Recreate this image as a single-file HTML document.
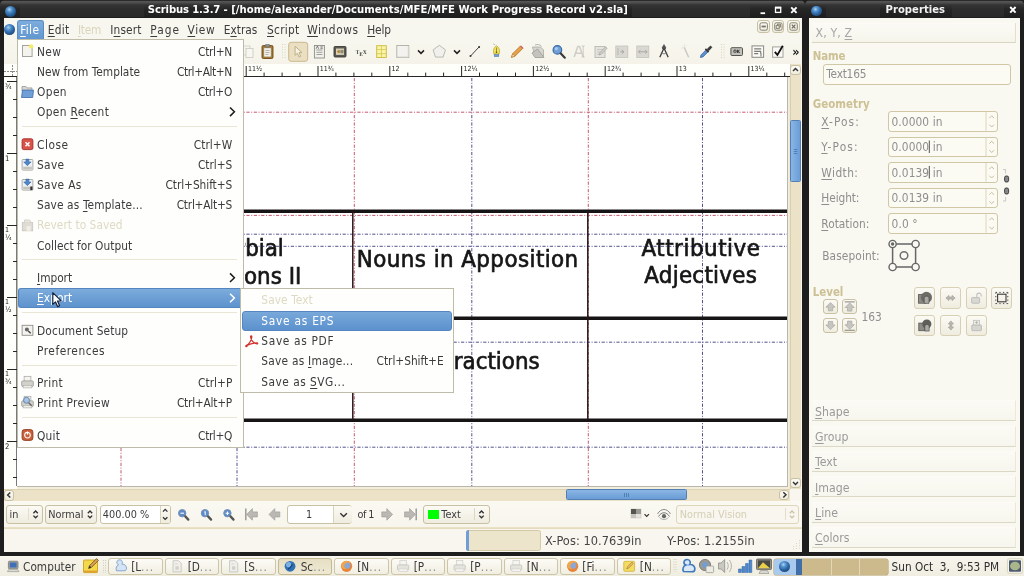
<!DOCTYPE html><html><head><meta charset="utf-8"><title>Scribus 1.3.7</title><style>
html,body{margin:0;padding:0;}
body{width:1024px;height:576px;overflow:hidden;background:#1d1d1d;position:relative;font-family:"DejaVu Sans Condensed","DejaVu Sans","Liberation Sans",sans-serif;font-stretch:condensed;color:#3b3b3b;}
div,svg,span{position:absolute;box-sizing:border-box;}
u{text-decoration:underline;text-underline-offset:1.5px;text-decoration-thickness:1px;}
.btn{border:1px solid #c9c1a4;border-radius:3px;background:linear-gradient(#fbfaf4,#efecdf);}
.fld{border:1px solid #cfc7a6;border-radius:3px;background:#fbfaf3;}

</style></head><body><div id="screen" style="left:0;top:0;width:1024px;height:576px;overflow:hidden;will-change:transform;">
<div style="left:0px;top:0px;width:804.6px;height:556px;background:#1e1e1e;border-radius:5px 5px 0 0;"></div>
<div style="left:802px;top:18px;width:8px;height:538px;background:#1e1e1e;"></div>
<div style="left:0px;top:0px;width:804.6px;height:18.3px;border-radius:5px 5px 0 0;background:linear-gradient(#161616 0px,#585858 1.6px,#4a4a4a 3px,#333 5px,#262626 9px,#1e1e1e 18px);"></div>
<div style="left:20px;top:5px;width:124px;height:12px;background-image:radial-gradient(circle,#363636 0.55px,transparent 0.85px);background-size:2px 2px;"></div>
<div style="left:632px;top:5px;width:118px;height:12px;background-image:radial-gradient(circle,#363636 0.55px,transparent 0.85px);background-size:2px 2px;"></div>
<div style="left:5.4px;top:5.8px;width:11px;height:11px;border-radius:50%;background:radial-gradient(circle at 40% 32%,#a9d3f0 0,#4f8fcb 26%,#2a629f 55%,#12345c 100%);"></div>
<div style="left:147.85px;top:3.41px;font-size:11.2px;line-height:13.04px;color:#ffffff;font-weight:bold;white-space:pre;letter-spacing:-0.137px;">Scribus 1.3.7 -</div>
<div style="left:231.15px;top:3.41px;font-size:11.2px;line-height:13.04px;color:#ffffff;font-weight:bold;white-space:pre;letter-spacing:0.052px;">[/home/alexander/Documents/MFE/MFE Work Progress Record v2.sla]</div>
<svg style="left:755px;top:3px" width="48" height="14" viewBox="0 0 48 14"><g stroke="#fff" fill="none"><path d="M5.5 10.2h4.6" stroke-width="1.8"/><rect x="20.5" y="4.6" width="5.2" height="4.8" stroke-width="1.3"/><path d="M20 4.6h6.200" stroke-width="2"/><path d="M36.200 4.300l5.400 5.600M41.600 4.300l-5.400 5.600" stroke-width="1.9"/></g></svg>
<div style="left:3.5px;top:18px;width:798.3px;height:534.4px;background:#f8f6ee;"></div>
<div style="left:3.5px;top:18px;width:798.3px;height:21.5px;background:#f8f7ef;"></div>
<div style="left:4.2px;top:24px;width:10.6px;height:10.6px;border-radius:50%;background:radial-gradient(circle at 40% 32%,#a9d3f0 0,#4f8fcb 26%,#2a629f 55%,#12345c 100%);"></div>
<div style="left:16.5px;top:20px;width:27.6px;height:19.5px;background:linear-gradient(#7dacdc,#6096d0);border-radius:3px 3px 0 0;border:1px solid #5a8cc4;border-bottom:none;"></div>
<div style="left:20.13px;top:23.65px;font-size:11.8px;line-height:13.74px;color:#fff;font-weight:normal;white-space:pre;letter-spacing:0.364px;"><u>F</u>ile</div>
<div style="left:47.73px;top:23.65px;font-size:11.8px;line-height:13.74px;color:#3b3b3b;font-weight:normal;white-space:pre;letter-spacing:0.334px;"><u>E</u>dit</div>
<div style="left:77.93px;top:23.65px;font-size:11.8px;line-height:13.74px;color:#dad5bc;font-weight:normal;white-space:pre;letter-spacing:-0.264px;"><u>I</u>tem</div>
<div style="left:110.33px;top:23.65px;font-size:11.8px;line-height:13.74px;color:#3b3b3b;font-weight:normal;white-space:pre;letter-spacing:0.102px;">I<u>n</u>sert</div>
<div style="left:150.33px;top:23.65px;font-size:11.8px;line-height:13.74px;color:#3b3b3b;font-weight:normal;white-space:pre;letter-spacing:0.975px;"><u>P</u>age</div>
<div style="left:187.53px;top:23.65px;font-size:11.8px;line-height:13.74px;color:#3b3b3b;font-weight:normal;white-space:pre;letter-spacing:0.636px;"><u>V</u>iew</div>
<div style="left:223.73px;top:23.65px;font-size:11.8px;line-height:13.74px;color:#3b3b3b;font-weight:normal;white-space:pre;letter-spacing:0.003px;">E<u>x</u>tras</div>
<div style="left:267.03px;top:23.65px;font-size:11.8px;line-height:13.74px;color:#3b3b3b;font-weight:normal;white-space:pre;letter-spacing:0.277px;"><u>S</u>cript</div>
<div style="left:307.13px;top:23.65px;font-size:11.8px;line-height:13.74px;color:#3b3b3b;font-weight:normal;white-space:pre;letter-spacing:0.601px;"><u>W</u>indows</div>
<div style="left:367.23px;top:23.65px;font-size:11.8px;line-height:13.74px;color:#3b3b3b;font-weight:normal;white-space:pre;letter-spacing:-0.146px;"><u>H</u>elp</div>
<div class="btn" style="left:757.3px;top:20.2px;width:12.4px;height:12.4px;"></div>
<div class="btn" style="left:772.1px;top:20.2px;width:12.4px;height:12.4px;"></div>
<div class="btn" style="left:787.3px;top:20.2px;width:12.4px;height:12.4px;"></div>
<svg style="left:757px;top:20px" width="44" height="13" viewBox="0 0 44 13"><g stroke="#85826f" stroke-width="1" fill="none"><rect x="3" y="2.800" width="7.400" height="7.400" rx="1.500"/><path d="M4.600 6.500h4.200" stroke-width="1.800" stroke="#77746a"/><rect x="17.700" y="2.800" width="7.400" height="7.400" rx="1.500"/><rect x="20.400" y="4.200" width="3" height="2.800"/><rect x="19.200" y="5.600" width="3" height="2.800" fill="#f3f1e6"/><rect x="32.900" y="2.800" width="7.400" height="7.400" rx="1.500"/><path d="M34.800 4.700l3.600 3.600M38.400 4.700l-3.600 3.600" stroke-width="1.200" stroke="#6d6a5a"/></g></svg>
<div style="left:3.5px;top:39.5px;width:798.3px;height:24.5px;background:linear-gradient(#f8f7ef,#f5f3e9);"></div>
<svg style="left:0;top:0" width="806" height="66" viewBox="0 0 806 66"><g transform="translate(248 51.5)"><rect x="-5" y="-5.5" width="7" height="9" fill="#f4f3ee" stroke="#cfcdc2" stroke-width=".8"/><rect x="-2" y="-3" width="7" height="9" fill="#f8f7f2" stroke="#c9c7bb" stroke-width=".8"/></g><g transform="translate(267.5 51.5)"><rect x="-5.5" y="-6" width="11" height="13" rx="1.3" fill="#a8772a" stroke="#6e4a12" stroke-width=".9"/><rect x="-3.6" y="-3.6" width="7.2" height="9" fill="#f2f0e8" stroke="#8d8a7e" stroke-width=".5"/><rect x="-2.3" y="-7" width="4.6" height="2.6" rx=".8" fill="#8f8f8f" stroke="#555" stroke-width=".5"/><path d="M-2 -1h4M-2 1h4M-2 3h3" stroke="#9a978c" stroke-width=".7"/></g><path d="M282.5 44v15M285 44v15" stroke="#d8d3c0" stroke-width="1" stroke-dasharray="1 1.6"/><path d="M721.5 44v15M724 44v15" stroke="#d8d3c0" stroke-width="1" stroke-dasharray="1 1.6"/><rect x="288.7" y="42.3" width="19" height="19" rx="2.5" fill="#eadfc2" stroke="#c9b88b" stroke-width="1"/><g transform="translate(298.3 51.5)"><path d="M-3.2 -5.2l0 9 2.2-2 1.8 3.8 1.6-.8-1.8-3.6 3-.2z" fill="#f7f3e4" stroke="#b9a97c" stroke-width=".9" stroke-linejoin="round"/></g><g transform="translate(319.4 51.5)"><rect x="-5" y="-6" width="10" height="12.5" fill="#f1f0eb" stroke="#8d8d88" stroke-width=".9"/><path d="M-3 -1.5h6M-3 .8h6M-3 3h6" stroke="#8a8a86" stroke-width=".8"/><path d="M-3.3 -2.7l1.3-2.8 1.3 2.8M1 -4.6h2.4M1 -3.2h2.4" stroke="#555" stroke-width=".7" fill="none"/></g><g transform="translate(340 51.5)"><rect x="-6" y="-5" width="12" height="10.5" rx="1" fill="#5a5852" stroke="#3c3a35" stroke-width=".9"/><rect x="-4" y="-3" width="8" height="6.4" fill="#d9d2b6"/><circle cx="-1.2" cy="0" r="1.6" fill="#b58a3a"/><rect x="0.5" y="-1.6" width="3" height="3.4" fill="#8d8a7a"/></g><text x="361.2" y="54.3" text-anchor="middle" font-size="5.2" font-weight="bold" fill="#4a4a4a" font-family='"DejaVu Serif","Liberation Serif",serif'>T<tspan dy="1.3">E</tspan><tspan dy="-1.3">X</tspan></text><g transform="translate(381.5 51.5)"><rect x="-4.8" y="-5.800" width="9.600" height="11.800" fill="#f9f3a6" stroke="#cbb93a" stroke-width=".9"/><path d="M0 -5.800v11.800M-4.800 -2h9.600M-4.800 2.200h9.600" stroke="#d2c24e" stroke-width=".7"/></g><g transform="translate(402.8 51.5)"><rect x="-6" y="-6" width="12" height="12" fill="#f3f2ee" stroke="#aeada6" stroke-width=".9"/><path d="M-5.5 5.5h11v-11" stroke="#d6d5cf" stroke-width="1" fill="none"/></g><g transform="translate(421 52.0)"><path d="M-3 -1.6l3 3 3-3" stroke="#222" stroke-width="1.5" fill="none"/></g><g transform="translate(439.3 51.5)"><path d="M0 -6.2l6.2 4.6-2.4 7.2h-7.6l-2.4-7.2z" fill="#f1f0ec" stroke="#b4b3ac" stroke-width=".9"/></g><g transform="translate(457 52.0)"><path d="M-3 -1.6l3 3 3-3" stroke="#222" stroke-width="1.5" fill="none"/></g><g transform="translate(474.8 51.5)"><path d="M-4.3 4.6l8.6-9.2" stroke="#444" stroke-width="1"/><circle cx="-4.3" cy="4.6" r="1" fill="#333"/><circle cx="4.3" cy="-4.6" r="1" fill="#333"/></g><g transform="translate(496.5 51.5)"><path d="M0 -5.800c2.800 2 3.800 5 2.400 8.400h-4.800c-1.400-3.400-.4-6.400 2.400-8.400z" fill="#f1e25e" stroke="#b8a228" stroke-width=".8"/><path d="M0 -4v4.400" stroke="#7a6c22" stroke-width=".7"/><circle cx="0" cy=".8" r=".8" fill="#5a4e10"/><rect x="-2.400" y="3" width="4.800" height="2.200" fill="#6f9fd6" stroke="#44709f" stroke-width=".4"/><path d="M-1.200 -6.400l-2.200-1.400" stroke="#aaa" stroke-width=".7"/></g><g transform="translate(517.3 51.5)"><path d="M-5.8 5.8l1.2-3.6 7.8-7.8 2.4 2.4-7.8 7.8z" fill="#e6a04a" stroke="#b0702a" stroke-width=".8"/><path d="M-5.8 5.8l1.2-3.6 2.4 2.4z" fill="#f1d9a8" stroke="#b0702a" stroke-width=".5"/><path d="M3.2 -5.6l2.4 2.4" stroke="#c66" stroke-width="1.4"/></g><g transform="translate(538 51.5)"><path d="M-5.5 -4.5h8l3 3v6.5h-8.5z" fill="#d7d6d1" stroke="#a9a8a2" stroke-width=".8"/><path d="M-6 1.5l5.5-4 6.5 8.5h-9z" fill="#c4c3bd" stroke="#9c9b95" stroke-width=".8"/><path d="M-3 -6.5c2.5-1 5-.4 6.6 1.4" stroke="#aaa" stroke-width=".9" fill="none"/></g><g transform="translate(558.8 51.5)"><circle cx="-1.4" cy="-1.6" r="4.3" fill="#6f9fd6" stroke="#3b6caa" stroke-width="1.2"/><circle cx="-2.4" cy="-2.8" r="1.6" fill="#a9c8ea"/><path d="M1.8 1.8l4.2 4.4" stroke="#3a3a3a" stroke-width="2.2" stroke-linecap="round"/></g><g transform="translate(579 51.5)"><path d="M-4.8 5.5l3.6-10.5h1.8l3.6 10.5M-3.2 1.8h5.6" stroke="#cfcec8" stroke-width="1.6" fill="none"/><path d="M4.2 -5.5v11M2.8 -5.5h2.8M2.8 5.5h2.8" stroke="#c2c1bb" stroke-width=".8"/></g><g transform="translate(600.5 51.5)"><rect x="-5.5" y="-5" width="10" height="11" fill="#e4e3de" stroke="#b9b8b2" stroke-width=".9"/><path d="M-3.5 -2h6M-3.5 .4h5M-3.5 2.8h3.5" stroke="#c2c1bb" stroke-width=".8"/><path d="M-1.5 3.5l1-2.4 5.6-5.8 1.5 1.5-5.6 5.8z" fill="#d1d0ca" stroke="#a3a29c" stroke-width=".7"/></g><g transform="translate(621.8 51.5)"><rect x="-6" y="-5.5" width="12" height="11.5" fill="#d9d8d3" stroke="#c3c2bc" stroke-width=".8"/><path d="M-1.5 .3h3.5M0 -1.6l2.2 1.9-2.2 1.9" stroke="#a9a8a2" stroke-width="1" fill="none"/><path d="M-3.8 -3.5v7" stroke="#b5b4ae" stroke-width=".9"/></g><g transform="translate(642.8 51.5)"><rect x="-6" y="-5.5" width="12" height="11.5" fill="#d9d8d3" stroke="#c3c2bc" stroke-width=".8"/><path d="M-4 .3h8M-2.4 -1.4l-2 1.7 2 1.7M2.4 -1.4l2 1.7-2 1.7" stroke="#a9a8a2" stroke-width="1" fill="none"/></g><g transform="translate(664 51.5)"><path d="M0 -3.4l-4.2 9.2M0 -3.4l4.2 9.2" stroke="#3c3c3c" stroke-width="1.3"/><circle cx="0" cy="-3.8" r="1.7" fill="#555" stroke="#2b2b2b" stroke-width=".6"/><path d="M0 -7v2" stroke="#333" stroke-width="1.2"/><path d="M-3.2 1.4c2 1.2 4.4 1.2 6.4 0" stroke="#666" stroke-width=".8" fill="none"/></g><g transform="translate(686 51.5)"><path d="M-1.8 -4.2l4.4 10" stroke="#c9c8c2" stroke-width="1.5"/><path d="M-3.6 -5.8l1 1M-1.2 -7v1.4M-4.6 -3.4h1.4M.6 -5.8l-.8.8" stroke="#d4d3cd" stroke-width=".7"/></g><g transform="translate(706 51.5)"><path d="M-5.6 6l.6-2.6 5-5 2 2-5 5z" fill="#5b8fd0" stroke="#2e5f9c" stroke-width=".7"/><path d="M-.6 -2.6l3.2 3.2" stroke="#333" stroke-width="1.6"/><path d="M1.2 -2.2l2.6-2.8c1-1 2.6.6 1.6 1.6l-2.8 2.6z" fill="#3a3a3a" stroke="#222" stroke-width=".6"/></g><g transform="translate(736.7 51.5)"><rect x="-5.800" y="-3.800" width="11.600" height="7.800" rx="1" fill="#c2c1bb" stroke="#55544f" stroke-width="1"/></g><text x="736.7" y="53.4" text-anchor="middle" font-size="4.6" font-weight="bold" fill="#1e1e1e" font-family='"DejaVu Sans","Liberation Sans",sans-serif'>OK</text><g transform="translate(757.8 51.5)"><rect x="-5.800" y="-5.600" width="11.600" height="11.400" fill="#fbfaf6" stroke="#8a8983" stroke-width="1"/><path d="M-3.600 -2.600h7M-3.600 -.2h7M-3.600 2.200h4" stroke="#4a4a46" stroke-width=".9"/><path d="M2.2 1.6l1-.6v4" stroke="#333" stroke-width=".7" fill="none"/></g><g transform="translate(778 51.5)"><rect x="-5.400" y="-4.600" width="10.400" height="10.400" fill="#fbfaf6" stroke="#a3a29c" stroke-width="1"/><path d="M-3.200 .4l2.600 3 5.400-9.200" stroke="#111" stroke-width="1.800" fill="none"/></g><text x="795.800" y="56" text-anchor="middle" font-size="12.500" font-weight="bold" fill="#1a1a1a" font-family='"DejaVu Sans","Liberation Sans",sans-serif'>»</text></svg>
<div style="left:3.5px;top:64px;width:786.5px;height:13.2px;background:#fefefb;border-bottom:1px solid #262626;"></div>
<svg style="left:0;top:63px" width="806" height="15" viewBox="0 0 806 15"><path d="M30.8 3V13.700 M48.8 9.600V13.700 M66.7 9.600V13.700 M84.7 9.600V13.700 M102.6 3V13.700 M120.5 9.600V13.700 M138.5 9.600V13.700 M156.4 9.600V13.700 M174.4 3V13.700 M192.3 9.600V13.700 M210.3 9.600V13.700 M228.2 9.600V13.700 M246.2 3V13.700 M264.1 9.600V13.700 M282.1 9.600V13.700 M300.0 9.600V13.700 M318.0 3V13.700 M335.9 9.600V13.700 M353.9 9.600V13.700 M371.8 9.600V13.700 M389.8 3V13.700 M407.8 9.600V13.700 M425.7 9.600V13.700 M443.6 9.600V13.700 M461.6 3V13.700 M479.5 9.600V13.700 M497.5 9.600V13.700 M515.5 9.600V13.700 M533.4 3V13.700 M551.3 9.600V13.700 M569.3 9.600V13.700 M587.2 9.600V13.700 M605.2 3V13.700 M623.1 9.600V13.700 M641.1 9.600V13.700 M659.0 9.600V13.700 M677.0 3V13.700 M695.0 9.600V13.700 M712.9 9.600V13.700 M730.8 9.600V13.700 M748.8 3V13.700 M766.8 9.600V13.700 M784.7 9.600V13.700" stroke="#262626" stroke-width="1" fill="none"/><text x="248.0" y="8.300" font-size="7" fill="#222" font-family='"DejaVu Sans Condensed","DejaVu Sans","Liberation Sans",sans-serif'>11½</text><text x="319.8" y="8.300" font-size="7" fill="#222" font-family='"DejaVu Sans Condensed","DejaVu Sans","Liberation Sans",sans-serif'>11¾</text><text x="391.6" y="8.300" font-size="7" fill="#222" font-family='"DejaVu Sans Condensed","DejaVu Sans","Liberation Sans",sans-serif'>12</text><text x="463.4" y="8.300" font-size="7" fill="#222" font-family='"DejaVu Sans Condensed","DejaVu Sans","Liberation Sans",sans-serif'>12¼</text><text x="535.2" y="8.300" font-size="7" fill="#222" font-family='"DejaVu Sans Condensed","DejaVu Sans","Liberation Sans",sans-serif'>12½</text><text x="607.0" y="8.300" font-size="7" fill="#222" font-family='"DejaVu Sans Condensed","DejaVu Sans","Liberation Sans",sans-serif'>12¾</text><text x="678.8" y="8.300" font-size="7" fill="#222" font-family='"DejaVu Sans Condensed","DejaVu Sans","Liberation Sans",sans-serif'>13</text><text x="750.6" y="8.300" font-size="7" fill="#222" font-family='"DejaVu Sans Condensed","DejaVu Sans","Liberation Sans",sans-serif'>13¼</text></svg>
<div style="left:3.5px;top:64px;width:13.2px;height:13.2px;background:#fefefb;border-bottom:1px solid #262626;"></div>
<svg style="left:4px;top:63px" width="13" height="15"><path d="M0 8.500h13M8.500 2v11" stroke="#8a8a8a" stroke-width="1" fill="none" stroke-dasharray="2 1"/></svg>
<div style="left:3.5px;top:77.2px;width:13.7px;height:411.6px;background:#fefefb;border-right:1px solid #7a7a7a;"></div>
<svg style="left:3.500px;top:77px" width="14" height="412" viewBox="0 0 14 412"><path d="M3 4.5H13.200 M9 22.5H13.200 M9 40.5H13.200 M9 58.5H13.200 M3 76.5H13.200 M9 94.5H13.200 M9 112.5H13.200 M9 130.5H13.200 M3 148.5H13.200 M9 166.5H13.200 M9 184.5H13.200 M9 202.5H13.200 M3 220.5H13.200 M9 238.5H13.200 M9 256.5H13.200 M9 274.5H13.200 M3 292.5H13.200 M9 310.5H13.200 M9 328.5H13.200 M9 346.5H13.200 M3 364.5H13.200 M9 382.5H13.200 M9 400.5H13.200" stroke="#262626" stroke-width="1" fill="none"/><text x="1" y="12.0" font-size="7.500" fill="#222" font-family='"DejaVu Sans Condensed","DejaVu Sans","Liberation Sans",sans-serif'>¾</text><text x="1" y="83.5" font-size="7.600" fill="#222" font-family='"DejaVu Sans Condensed","DejaVu Sans","Liberation Sans",sans-serif'>1</text><text x="1" y="155.0" font-size="7" fill="#222" font-family='"DejaVu Sans Condensed","DejaVu Sans","Liberation Sans",sans-serif'>1</text><text x="1" y="162.5" font-size="7.500" fill="#222" font-family='"DejaVu Sans Condensed","DejaVu Sans","Liberation Sans",sans-serif'>¼</text><text x="1" y="227.0" font-size="7" fill="#222" font-family='"DejaVu Sans Condensed","DejaVu Sans","Liberation Sans",sans-serif'>1</text><text x="1" y="234.5" font-size="7.500" fill="#222" font-family='"DejaVu Sans Condensed","DejaVu Sans","Liberation Sans",sans-serif'>½</text><text x="1" y="299.0" font-size="7" fill="#222" font-family='"DejaVu Sans Condensed","DejaVu Sans","Liberation Sans",sans-serif'>1</text><text x="1" y="306.5" font-size="7.500" fill="#222" font-family='"DejaVu Sans Condensed","DejaVu Sans","Liberation Sans",sans-serif'>¾</text><text x="1" y="371.5" font-size="7.600" fill="#222" font-family='"DejaVu Sans Condensed","DejaVu Sans","Liberation Sans",sans-serif'>2</text></svg>
<div style="left:17.2px;top:77.2px;width:772.8px;height:412px;background:#f3eedc;border-right:1px solid #efe9d4;"></div>
<div style="left:17.2px;top:77.2px;width:770.6px;height:409.6px;background:#b9b7ad;"></div>
<div style="left:17.2px;top:77.2px;width:770.2px;height:409px;background:#ffffff;overflow:hidden;"><svg style="left:-17.2px;top:-77.2px" width="806" height="576" viewBox="0 0 806 576"><path d="M121 78V490" stroke="#b92f4a" stroke-width="0.8" stroke-dasharray="3.2 1.6 1 1.6" fill="none"/><path d="M354.3 78V490" stroke="#b92f4a" stroke-width="0.8" stroke-dasharray="3.2 1.6 1 1.6" fill="none"/><path d="M588.3 78V490" stroke="#b92f4a" stroke-width="0.8" stroke-dasharray="3.2 1.6 1 1.6" fill="none"/><path d="M237 78V490" stroke="#24246e" stroke-width="0.8" stroke-dasharray="3.2 1.6 1 1.6" fill="none"/><path d="M471.8 78V490" stroke="#24246e" stroke-width="0.8" stroke-dasharray="3.2 1.6 1 1.6" fill="none"/><path d="M702.5 78V490" stroke="#24246e" stroke-width="0.8" stroke-dasharray="3.2 1.6 1 1.6" fill="none"/><path d="M17 112.2H788" stroke="#b92f4a" stroke-width="0.8" stroke-dasharray="3.2 1.6 1 1.6" fill="none"/><path d="M17 215.4H788" stroke="#b92f4a" stroke-width="0.8" stroke-dasharray="3.2 1.6 1 1.6" fill="none"/><path d="M17 234.2H788" stroke="#24246e" stroke-width="0.8" stroke-dasharray="3.2 1.6 1 1.6" fill="none"/><path d="M17 246.3H788" stroke="#24246e" stroke-width="0.8" stroke-dasharray="3.2 1.6 1 1.6" fill="none"/><path d="M17 342.2H788" stroke="#24246e" stroke-width="0.8" stroke-dasharray="3.2 1.6 1 1.6" fill="none"/><path d="M17 447.2H788" stroke="#24246e" stroke-width="0.8" stroke-dasharray="3.2 1.6 1 1.6" fill="none"/><path d="M17 211.3H787.5" stroke="#161414" stroke-width="3.6" fill="none"/><path d="M17 318.2H787.5" stroke="#161414" stroke-width="3.6" fill="none"/><path d="M17 420.2H787.5" stroke="#161414" stroke-width="3.6" fill="none"/><path d="M352.8 211V420" stroke="#2a1516" stroke-width="1.5" fill="none"/><path d="M587.8 211V420" stroke="#2a1516" stroke-width="1.5" fill="none"/></svg><div style="left:227.5px;top:0px;width:100px;height:409px;overflow:hidden;"><div style="right:60.95px;top:157.41px;font-size:23.8px;line-height:27.70px;color:#161616;font-weight:normal;white-space:pre;-webkit-text-stroke:0.65px #161616;">Adverbial</div><div style="right:43.45px;top:185.91px;font-size:23.8px;line-height:27.70px;color:#161616;font-weight:normal;white-space:pre;-webkit-text-stroke:0.65px #161616;">Expressions II</div></div><div style="left:339.65px;top:168.81px;font-size:23.8px;line-height:27.70px;color:#161616;font-weight:normal;white-space:pre;letter-spacing:0.434px;-webkit-text-stroke:0.65px #161616;">Nouns in Apposition</div><div style="left:624.35px;top:157.61px;font-size:23.8px;line-height:27.70px;color:#161616;font-weight:normal;white-space:pre;letter-spacing:0.529px;-webkit-text-stroke:0.65px #161616;">Attributive</div><div style="left:627.15px;top:185.21px;font-size:23.8px;line-height:27.70px;color:#161616;font-weight:normal;white-space:pre;letter-spacing:0.269px;-webkit-text-stroke:0.65px #161616;">Adjectives</div><div style="right:247.75px;top:271.31px;font-size:23.8px;line-height:27.70px;color:#161616;font-weight:normal;white-space:pre;-webkit-text-stroke:0.65px #161616;">Contractions</div></div>
<div style="left:790px;top:64px;width:11px;height:424.5px;background:#ebe2c7;border-left:1px solid #d8cfb0;"></div>
<div class="btn" style="left:790.2px;top:64.5px;width:10.5px;height:10px;"></div>
<div class="btn" style="left:790.2px;top:478px;width:10.6px;height:10.4px;"></div>
<div style="left:790.4px;top:120.4px;width:10.2px;height:61.8px;background:linear-gradient(90deg,#8ab6e4,#6a9dd6);border:1px solid #547fb4;border-radius:1.5px;"></div>
<svg style="left:789px;top:63px" width="13" height="427"><g stroke="#333" stroke-width="1.400" fill="none"><path d="M4 8l2.500-2.600 2.500 2.600"/><path d="M4 419l2.500 2.600 2.500-2.600"/></g><path d="M4.800 86.500h3.600M4.800 88.500h3.600M4.800 90.500h3.600" stroke="#4676b0" stroke-width="0.800"/></svg>
<div style="left:3.5px;top:489.2px;width:786.5px;height:11.5px;background:#ebe2c7;border-top:1px solid #ddd3b2;"></div>
<div style="left:3.5px;top:486.4px;width:13.7px;height:3px;background:#fefefb;"></div>
<div class="btn" style="left:4px;top:489.6px;width:10.2px;height:11px;"></div>
<div class="btn" style="left:779.2px;top:489.5px;width:10.3px;height:10.8px;"></div>
<div style="left:566px;top:489.3px;width:121.3px;height:11px;background:linear-gradient(#8ab6e4,#6a9dd6);border:1px solid #547fb4;border-radius:1.5px;"></div>
<svg style="left:4px;top:489px" width="786" height="12"><g stroke="#333" stroke-width="1.400" fill="none"><path d="M6.300 3.400l-2.700 2.600 2.700 2.600"/><path d="M779.300 3.200l2.700 2.600-2.700 2.600"/></g><path d="M620.500 4v4M622.500 4v4M624.500 4v4" stroke="#4676b0" stroke-width="0.800"/></svg>
<div style="left:3.5px;top:500.7px;width:798.3px;height:26.5px;background:linear-gradient(#faf9f2,#f7f5ec);"></div>
<div style="left:3.5px;top:527px;width:798.3px;height:1.8px;background:linear-gradient(#ece4c9,#e2d8b8);"></div>
<div class="btn" style="left:6.2px;top:505.3px;width:36.5px;height:18.3px;"></div>
<div style="left:9.57px;top:509.18px;font-size:10.8px;line-height:12.57px;color:#3b3b3b;font-weight:normal;white-space:pre;">in</div>
<div class="btn" style="left:45.2px;top:505.3px;width:52px;height:18.3px;"></div>
<div style="left:48.37px;top:509.18px;font-size:10.8px;line-height:12.57px;color:#3b3b3b;font-weight:normal;white-space:pre;">Normal</div>
<div style="left:100.2px;top:505.3px;width:71.2px;height:18.3px;background:#fff;border:1px solid #c9c1a4;border-radius:3px;"></div>
<div style="left:159.6px;top:506.3px;width:10.8px;height:16.3px;background:linear-gradient(#fbfaf4,#efecdf);border-left:1px solid #d9d3bb;border-radius:0 2px 2px 0;"></div>
<div style="left:102.87px;top:509.18px;font-size:10.8px;line-height:12.57px;color:#3b3b3b;font-weight:normal;white-space:pre;">400.00 %</div>
<div style="left:287.3px;top:505px;width:65.2px;height:18.8px;background:#fff;border:1px solid #c9c1a4;border-radius:3px;"></div>
<div style="left:333.4px;top:506.3px;width:18.3px;height:16.5px;background:linear-gradient(#fbfaf4,#efecdf);border-left:1px solid #d9d3bb;border-radius:0 2px 2px 0;"></div>
<div style="left:305.97px;top:509.18px;font-size:10.8px;line-height:12.57px;color:#3b3b3b;font-weight:normal;white-space:pre;">1</div>
<div style="left:357.57px;top:509.18px;font-size:10.8px;line-height:12.57px;color:#3b3b3b;font-weight:normal;white-space:pre;letter-spacing:-0.582px;">of 1</div>
<div class="btn" style="left:422.8px;top:505.3px;width:67px;height:18.5px;"></div>
<div style="left:427.8px;top:509.7px;width:11.2px;height:9.2px;background:#00ff00;"></div>
<div style="left:441.37px;top:509.18px;font-size:10.8px;line-height:12.57px;color:#3b3b3b;font-weight:normal;white-space:pre;">Text</div>
<div style="left:676.2px;top:505.3px;width:123px;height:18.5px;border:1px solid #ddd6bb;border-radius:3px;background:#f8f6ee;"></div>
<div style="left:679.87px;top:509.18px;font-size:10.8px;line-height:12.57px;color:#d5cfb5;font-weight:normal;white-space:pre;">Normal Vision</div>
<svg style="left:0;top:500px" width="806" height="30" viewBox="0 0 806 30"><path d="M28.500 8v12" stroke="#e4dfcb" stroke-width="1"/><path d="M33.4 13.200000000000001l2.2-2.2 2.2 2.2M33.4 15.6l2.2 2.2 2.2-2.2" stroke="#2e2e2e" stroke-width="1.300" fill="none"/><path d="M87.8 13.200000000000001l2.2-2.2 2.2 2.2M87.8 15.6l2.2 2.2 2.2-2.2" stroke="#2e2e2e" stroke-width="1.300" fill="none"/><path d="M163.0 11.6l2.2-2.2 2.2 2.2M163.0 17.200000000000003l2.2 2.2 2.2-2.2" stroke="#2e2e2e" stroke-width="1.300" fill="none"/><circle cx="182.2" cy="13.2" r="3.7" fill="#5b8bc9" stroke="#7d93b4" stroke-width="1"/><path d="M185.3 16.4l3 3.200" stroke="#555" stroke-width="2.300" stroke-linecap="round"/><path d="M180.4 13.2h3.6" stroke="#fff" stroke-width="1.1"/><circle cx="205.0" cy="13.2" r="3.7" fill="#5b8bc9" stroke="#7d93b4" stroke-width="1"/><path d="M208.10000000000002 16.4l3 3.200" stroke="#555" stroke-width="2.300" stroke-linecap="round"/><path d="M204.3 12.2l.9-.8v3.8" stroke="#fff" stroke-width="1" fill="none"/><circle cx="227.39999999999998" cy="13.2" r="3.7" fill="#5b8bc9" stroke="#7d93b4" stroke-width="1"/><path d="M230.5 16.4l3 3.200" stroke="#555" stroke-width="2.300" stroke-linecap="round"/><path d="M225.6 13.2h3.6M227.39999999999998 11.399999999999999v3.6" stroke="#fff" stroke-width="1.1"/><path d="M246.6 14.4l5.8 -5.800v3.300h5v5h-5v3.300z" fill="#b9b8b2" stroke="#a09f99" stroke-width=".7"/><path d="M245.79999999999998 8.600000000000001v11.600" stroke="#9c9b95" stroke-width="1.500"/><path d="M269.0 14.4l5.8 -5.800v3.300h5v5h-5v3.300z" fill="#b9b8b2" stroke="#a09f99" stroke-width=".7"/><path d="M392.6 14.4l-5.8 -5.800v3.300h-5v5h5v3.300z" fill="#b9b8b2" stroke="#a09f99" stroke-width=".7"/><path d="M415.40000000000003 14.4l-5.8 -5.800v3.300h-5v5h5v3.300z" fill="#b9b8b2" stroke="#a09f99" stroke-width=".7"/><path d="M416.2 8.600000000000001v11.600" stroke="#9c9b95" stroke-width="1.500"/><path d="M340.3 13.2l3.3 3.2 3.3-3.2" stroke="#333" stroke-width="1.4" fill="none"/><path d="M479.3 13.200000000000001l2.2-2.2 2.2 2.2M479.3 15.6l2.2 2.2 2.2-2.2" stroke="#2e2e2e" stroke-width="1.300" fill="none"/><path d="M474.5 8v12" stroke="#ddd7c0" stroke-width="1"/><rect x="631" y="9" width="10" height="9" fill="#e3e2dd" stroke="#c8c7c1" stroke-width=".6"/><rect x="631" y="9" width="5" height="5" fill="#55544f"/><rect x="636" y="9" width="5" height="5" fill="#9a9993"/><rect x="631" y="14" width="5" height="4" fill="#c4c3bd"/><path d="M644.5 14.2l2.2 2.2 2.2-2.2" stroke="#333" stroke-width="1.2" fill="none"/><path d="M658.5 16.5c3-5 8-5 11 0" stroke="#777" stroke-width="1" fill="none"/><path d="M657.5 14c3.5-6 9.5-6 13 0" stroke="#8a8a8a" stroke-width="1" fill="none"/><circle cx="664" cy="16.2" r="2.1" fill="#666"/><path d="M659.5 17.5c2.6 2.6 6.4 2.6 9 0" stroke="#999" stroke-width=".8" fill="none"/><path d="M789.8 13.200000000000001l2.2-2.2 2.2 2.2M789.8 15.6l2.2 2.2 2.2-2.2" stroke="#c9c3aa" stroke-width="1.300" fill="none"/><path d="M785.5 8v12" stroke="#e3decb" stroke-width="1"/></svg>
<div style="left:465.6px;top:530.2px;width:75px;height:20.6px;background:#ece5cc;border:1px solid #d3c9a6;border-radius:2.5px;"></div>
<div style="left:465.6px;top:530.2px;width:3.2px;height:20.6px;background:#6f9fd6;border-radius:2.5px 0 0 2.5px;"></div>
<div style="left:544.99px;top:534.01px;font-size:12.7px;line-height:14.78px;color:#454545;font-weight:normal;white-space:pre;letter-spacing:0.049px;">X-Pos: 10.7639in</div>
<div style="left:667.09px;top:534.01px;font-size:12.7px;line-height:14.78px;color:#454545;font-weight:normal;white-space:pre;letter-spacing:0.066px;">Y-Pos: 1.2155in</div>
<svg style="left:788px;top:538px" width="13" height="13"><path d="M11.5 2v10M8.5 5v7M5.5 8v4" stroke="#d9d4c0" stroke-width="1" stroke-dasharray="1 1.5"/></svg>
<div style="left:16.8px;top:39px;width:227px;height:408.8px;background:#fefefd;border:1px solid #bfbba9;"></div>
<div style="left:18.2px;top:288.3px;width:222.3px;height:19.3px;background:linear-gradient(#7dacdc,#5d92ce);border-radius:3px 0 0 3px;border:1px solid #5686c2;border-right:none;"></div>
<div style="left:37.03px;top:45.65px;font-size:11.8px;line-height:13.74px;color:#3b3b3b;font-weight:normal;white-space:pre;letter-spacing:0.362px;">New</div>
<div style="right:calc(791.73px - -0.308px);top:45.65px;font-size:11.8px;line-height:13.74px;color:#3b3b3b;font-weight:normal;white-space:pre;letter-spacing:-0.308px;">Ctrl+N</div>
<div style="left:37.03px;top:65.65px;font-size:11.8px;line-height:13.74px;color:#3b3b3b;font-weight:normal;white-space:pre;letter-spacing:0.018px;">New from Template</div>
<div style="right:calc(791.73px - -0.400px);top:65.65px;font-size:11.8px;line-height:13.74px;color:#3b3b3b;font-weight:normal;white-space:pre;letter-spacing:-0.400px;">Ctrl+Alt+N</div>
<div style="left:37.03px;top:86.05px;font-size:11.8px;line-height:13.74px;color:#3b3b3b;font-weight:normal;white-space:pre;letter-spacing:0.407px;">Open</div>
<div style="right:calc(791.73px - -0.352px);top:86.05px;font-size:11.8px;line-height:13.74px;color:#3b3b3b;font-weight:normal;white-space:pre;letter-spacing:-0.352px;">Ctrl+O</div>
<div style="left:37.03px;top:106.25px;font-size:11.8px;line-height:13.74px;color:#3b3b3b;font-weight:normal;white-space:pre;letter-spacing:0.341px;">Open <u>R</u>ecent</div>
<div style="left:22px;top:125.9px;width:215px;height:1px;background:#e9e6d6;"></div>
<div style="left:37.03px;top:138.65px;font-size:11.8px;line-height:13.74px;color:#3b3b3b;font-weight:normal;white-space:pre;letter-spacing:0.540px;">Close</div>
<div style="right:calc(791.73px - 0.060px);top:138.65px;font-size:11.8px;line-height:13.74px;color:#3b3b3b;font-weight:normal;white-space:pre;letter-spacing:0.060px;">Ctrl+W</div>
<div style="left:37.03px;top:158.95px;font-size:11.8px;line-height:13.74px;color:#3b3b3b;font-weight:normal;white-space:pre;letter-spacing:0.339px;">Save</div>
<div style="right:calc(791.73px - -0.027px);top:158.95px;font-size:11.8px;line-height:13.74px;color:#3b3b3b;font-weight:normal;white-space:pre;letter-spacing:-0.027px;">Ctrl+S</div>
<div style="left:37.03px;top:178.95px;font-size:11.8px;line-height:13.74px;color:#3b3b3b;font-weight:normal;white-space:pre;letter-spacing:0.344px;">Save As</div>
<div style="right:calc(791.73px - -0.067px);top:178.95px;font-size:11.8px;line-height:13.74px;color:#3b3b3b;font-weight:normal;white-space:pre;letter-spacing:-0.067px;">Ctrl+Shift+S</div>
<div style="left:37.03px;top:199.45px;font-size:11.8px;line-height:13.74px;color:#3b3b3b;font-weight:normal;white-space:pre;letter-spacing:0.133px;">Save as <u>T</u>emplate...</div>
<div style="right:calc(791.73px - -0.245px);top:199.45px;font-size:11.8px;line-height:13.74px;color:#3b3b3b;font-weight:normal;white-space:pre;letter-spacing:-0.245px;">Ctrl+Alt+S</div>
<div style="left:37.03px;top:219.45px;font-size:11.8px;line-height:13.74px;color:#dedac3;font-weight:normal;white-space:pre;letter-spacing:0.049px;">Revert to Saved</div>
<div style="left:37.03px;top:239.65px;font-size:11.8px;line-height:13.74px;color:#3b3b3b;font-weight:normal;white-space:pre;letter-spacing:0.032px;">Collect for Output</div>
<div style="left:22px;top:259.3px;width:215px;height:1px;background:#e9e6d6;"></div>
<div style="left:37.03px;top:272.15px;font-size:11.8px;line-height:13.74px;color:#3b3b3b;font-weight:normal;white-space:pre;letter-spacing:-0.031px;"><u>I</u>mport</div>
<div style="left:37.03px;top:292.45px;font-size:11.8px;line-height:13.74px;color:#ffffff;font-weight:normal;white-space:pre;letter-spacing:0.066px;"><u>E</u>xport</div>
<div style="left:22px;top:312.3px;width:215px;height:1px;background:#e9e6d6;"></div>
<div style="left:37.03px;top:324.75px;font-size:11.8px;line-height:13.74px;color:#3b3b3b;font-weight:normal;white-space:pre;letter-spacing:0.140px;">Document Setup</div>
<div style="left:37.03px;top:344.75px;font-size:11.8px;line-height:13.74px;color:#3b3b3b;font-weight:normal;white-space:pre;letter-spacing:0.522px;">Preferences</div>
<div style="left:22px;top:364.5px;width:215px;height:1px;background:#e9e6d6;"></div>
<div style="left:37.03px;top:376.75px;font-size:11.8px;line-height:13.74px;color:#3b3b3b;font-weight:normal;white-space:pre;letter-spacing:0.297px;">Print</div>
<div style="right:calc(791.73px - -0.002px);top:376.75px;font-size:11.8px;line-height:13.74px;color:#3b3b3b;font-weight:normal;white-space:pre;letter-spacing:-0.002px;">Ctrl+P</div>
<div style="left:37.03px;top:396.75px;font-size:11.8px;line-height:13.74px;color:#3b3b3b;font-weight:normal;white-space:pre;letter-spacing:0.296px;">Print Preview</div>
<div style="right:calc(791.73px - -0.229px);top:396.75px;font-size:11.8px;line-height:13.74px;color:#3b3b3b;font-weight:normal;white-space:pre;letter-spacing:-0.229px;">Ctrl+Alt+P</div>
<div style="left:22px;top:417.3px;width:215px;height:1px;background:#e9e6d6;"></div>
<div style="left:37.03px;top:429.55px;font-size:11.8px;line-height:13.74px;color:#3b3b3b;font-weight:normal;white-space:pre;letter-spacing:0.226px;">Quit</div>
<div style="right:calc(791.73px - -0.392px);top:429.55px;font-size:11.8px;line-height:13.74px;color:#3b3b3b;font-weight:normal;white-space:pre;letter-spacing:-0.392px;">Ctrl+Q</div>
<div style="left:240px;top:288.3px;width:214.3px;height:105px;background:#fefefd;border:1px solid #bfbba9;"></div>
<div style="left:242px;top:310.7px;width:210.3px;height:20px;background:linear-gradient(#79a9da,#5c91cd);border-radius:3px;border:1px solid #5686c2;"></div>
<div style="left:261.33px;top:294.45px;font-size:11.8px;line-height:13.74px;color:#dedac3;font-weight:normal;white-space:pre;letter-spacing:0.089px;">Save Text</div>
<div style="left:261.33px;top:315.05px;font-size:11.8px;line-height:13.74px;color:#ffffff;font-weight:normal;white-space:pre;letter-spacing:0.751px;">Save as EPS</div>
<div style="left:261.33px;top:335.45px;font-size:11.8px;line-height:13.74px;color:#3b3b3b;font-weight:normal;white-space:pre;letter-spacing:0.666px;">Save as PDF</div>
<div style="left:261.33px;top:355.45px;font-size:11.8px;line-height:13.74px;color:#3b3b3b;font-weight:normal;white-space:pre;letter-spacing:0.232px;">Save as <u>I</u>mage...</div>
<div style="right:calc(580.33px - -0.037px);top:355.45px;font-size:11.8px;line-height:13.74px;color:#3b3b3b;font-weight:normal;white-space:pre;letter-spacing:-0.037px;">Ctrl+Shift+E</div>
<div style="left:261.33px;top:375.65px;font-size:11.8px;line-height:13.74px;color:#3b3b3b;font-weight:normal;white-space:pre;letter-spacing:0.485px;">Save as <u>S</u>VG...</div>
<svg style="left:0;top:0" width="460" height="450" viewBox="0 0 460 450"><path d="M230 107.5l4.4 4.3-4.4 4.3" stroke="#1a1a1a" stroke-width="1.5" fill="none"/><path d="M230 273.4l4.4 4.3-4.4 4.3" stroke="#1a1a1a" stroke-width="1.5" fill="none"/><path d="M230 293.7l4.4 4.3-4.4 4.3" stroke="#ffffff" stroke-width="1.5" fill="none"/><g transform="translate(27.5 51)"><rect x="-5" y="-5.5" width="9.6" height="11" fill="#f4f3ee" stroke="#9b9a94" stroke-width=".9"/><circle cx="3.6" cy="-4.6" r="2.2" fill="#f4ec6a"/></g><g transform="translate(27.5 91.5)"><path d="M-5.5 -5h4l1 1.4h5v3h-10z" fill="#d8d7d2" stroke="#8d8c86" stroke-width=".7"/><path d="M-6 6l1-7.4h11l-.8 7.4z" fill="#6f9fd6" stroke="#3b6caa" stroke-width=".8"/></g><g transform="translate(27.5 144.2)"><rect x="-5.4" y="-5.4" width="10.8" height="10.8" rx="1.6" fill="#d9534b" stroke="#a32c26" stroke-width=".9"/><path d="M-2 -2l4 4M2 -2l-4 4" stroke="#fff" stroke-width="1.5"/></g><g transform="translate(27.5 164.5)"><rect x="-5.400" y="-5" width="10.800" height="10.600" rx=".8" fill="#eef2f7" stroke="#a3a29c" stroke-width=".9"/><rect x="-4.900" y="2" width="9.800" height="3.100" fill="#d4d3cd"/><path d="M-4 3.500h8" stroke="#a9a8a2" stroke-width=".7"/><path d="M-1.600 -5.400h3v2.800h2.200l-3.700 3.800-3.700-3.800h2.200z" fill="#4f86c9" stroke="#2e5f9c" stroke-width=".5"/></g><g transform="translate(27.5 184.5)"><rect x="-5.400" y="-5" width="10.800" height="10.600" rx=".8" fill="#eef2f7" stroke="#a3a29c" stroke-width=".9"/><rect x="-4.900" y="2" width="9.800" height="3.100" fill="#d4d3cd"/><path d="M-4 3.500h8" stroke="#a9a8a2" stroke-width=".7"/><path d="M-1.600 -5.400h3v2.800h2.200l-3.700 3.800-3.700-3.800h2.200z" fill="#4f86c9" stroke="#2e5f9c" stroke-width=".5"/><rect x="2.800" y="2" width="2.200" height="3.600" fill="#333"/></g><g transform="translate(27.5 225)"><rect x="-5.2" y="-2.4" width="10.4" height="8.2" fill="#dedcd4" stroke="#c6c4ba" stroke-width=".8"/><path d="M-3 -2.4v-2.6h5l1 1v1.6" fill="#e9e7df" stroke="#cfcdc3" stroke-width=".8"/><rect x="-1" y="1" width="4" height="4.8" fill="#f0eee6"/></g><g transform="translate(27.5 330.3)"><rect x="-5.4" y="-5" width="10.8" height="10" fill="#f3f2ee" stroke="#8f8e88" stroke-width=".9"/><circle cx="-.6" cy="-.8" r="2" fill="#666"/><path d="M.8 .6l2.4 2.4" stroke="#444" stroke-width="1.4"/></g><g transform="translate(27.5 382.3)"><rect x="-3.4" y="-6" width="6.8" height="5" fill="#f6f5f1" stroke="#a3a29c" stroke-width=".7"/><rect x="-5.8" y="-1.4" width="11.6" height="5.6" rx="1" fill="#d2d1cb" stroke="#9b9a94" stroke-width=".8"/><rect x="-4.4" y="3" width="8.8" height="2.6" fill="#efeee9" stroke="#a9a8a2" stroke-width=".6"/></g><g transform="translate(27.5 402.3)"><rect x="-3.4" y="-6" width="6.8" height="5" fill="#f6f5f1" stroke="#a3a29c" stroke-width=".7"/><rect x="-5.8" y="-1.4" width="11.6" height="5.6" rx="1" fill="#d2d1cb" stroke="#9b9a94" stroke-width=".8"/><rect x="-4.4" y="3" width="8.8" height="2.6" fill="#efeee9" stroke="#a9a8a2" stroke-width=".6"/><circle cx="-1" cy="-2" r="3" fill="#9fbfe4" fill-opacity=".85" stroke="#5a7fae" stroke-width=".9"/><path d="M1.2 .4l3 3" stroke="#666" stroke-width="1.4"/></g><g transform="translate(27.5 435)"><rect x="-5.4" y="-5.4" width="10.8" height="10.8" rx="2.4" fill="#c8603c" stroke="#8e3a1e" stroke-width=".9"/><circle cx="0" cy=".2" r="2.8" fill="none" stroke="#fff" stroke-width="1.1"/><path d="M0 -3.4v3" stroke="#fff" stroke-width="1.2"/></g><path d="M52.800 292.600v11.800l2.700-2.500 2.100 4.700 2-.9-2.100-4.600 3.700-.2z" fill="#fff" stroke="#14233d" stroke-width="1.200" stroke-linejoin="round"/><path d="M246.2 345.6c2.4-1.4 5-4.6 5.6-8.6.2-1.4-1.4-1.4-1.2 0 .6 3.4 2.8 6 6.2 6.8 1.2.2 1.2-1 0-1-3.6.2-7.6 1.2-10.4 2.8-1 .8-.6 1.4.4.8z" fill="none" stroke="#d2322c" stroke-width="1.3"/></svg>
<div style="left:804.8px;top:0px;width:219.2px;height:556px;background:#1e1e1e;border-radius:5px 5px 0 0;"></div>
<div style="left:804.8px;top:0px;width:219.2px;height:18px;border-radius:5px 5px 0 0;background:linear-gradient(#161616 0px,#585858 1.6px,#4a4a4a 3px,#333 5px,#262626 9px,#1e1e1e 18px);"></div>
<div style="left:826px;top:5px;width:54px;height:12px;background-image:radial-gradient(circle,#363636 0.55px,transparent 0.85px);background-size:2px 2px;"></div>
<div style="left:952px;top:5px;width:52px;height:12px;background-image:radial-gradient(circle,#363636 0.55px,transparent 0.85px);background-size:2px 2px;"></div>
<div style="left:811px;top:5.8px;width:10.6px;height:10.6px;border-radius:50%;background:radial-gradient(circle at 40% 32%,#a9d3f0 0,#4f8fcb 26%,#2a629f 55%,#12345c 100%);"></div>
<div style="left:885.55px;top:3.15px;font-size:11.15px;line-height:12.98px;color:#f2f2f2;font-weight:bold;white-space:pre;letter-spacing:0.047px;">Properties</div>
<svg style="left:1006px;top:3px" width="14" height="14"><path d="M4.200 4l5.400 5.600M9.600 4l-5.400 5.600" stroke="#fff" stroke-width="1.900"/></svg>
<div style="left:808.5px;top:17.8px;width:211.5px;height:534.6px;background:#f9f8f1;"></div>
<div style="left:812.3px;top:22.6px;width:204px;height:20.3px;border-bottom:1px solid #d9d5c3;border-right:1px solid #e2dfd0;background:linear-gradient(#fbfaf5,#f6f5ec);"></div>
<div style="left:815.51px;top:26.28px;font-size:12.2px;line-height:14.20px;color:#a6a6a6;font-weight:normal;white-space:pre;letter-spacing:0.161px;">X, Y, <u>Z</u></div>
<div style="left:812.84px;top:50.42px;font-size:11.4px;line-height:13.27px;color:#ccc094;font-weight:bold;white-space:pre;letter-spacing:-0.195px;">Name</div>
<div class="fld" style="left:823.3px;top:64.3px;width:188px;height:20.4px;"></div>
<div style="left:826.33px;top:68.35px;font-size:11.8px;line-height:13.74px;color:#8e8e8e;font-weight:normal;white-space:pre;letter-spacing:-0.237px;">Text165</div>
<div style="left:812.84px;top:98.22px;font-size:11.4px;line-height:13.27px;color:#ccc094;font-weight:bold;white-space:pre;letter-spacing:0.038px;">Geometry</div>
<div style="left:821.33px;top:115.55px;font-size:11.8px;line-height:13.74px;color:#8e8e8e;font-weight:normal;white-space:pre;letter-spacing:1.054px;"><u>X</u>-Pos:</div>
<div class="fld" style="left:887.5px;top:111.0px;width:110px;height:20.6px;"></div>
<div style="left:891.53px;top:115.55px;font-size:11.8px;line-height:13.74px;color:#8e8e8e;font-weight:normal;white-space:pre;letter-spacing:0.089px;">0.0000 in</div>
<div style="left:821.33px;top:141.05px;font-size:11.8px;line-height:13.74px;color:#8e8e8e;font-weight:normal;white-space:pre;letter-spacing:1.153px;"><u>Y</u>-Pos:</div>
<div class="fld" style="left:887.5px;top:136.5px;width:110px;height:20.6px;"></div>
<div style="left:891.53px;top:141.05px;font-size:11.8px;line-height:13.74px;color:#8e8e8e;font-weight:normal;white-space:pre;letter-spacing:0.089px;">0.0000 in</div>
<div style="left:821.33px;top:166.55px;font-size:11.8px;line-height:13.74px;color:#8e8e8e;font-weight:normal;white-space:pre;letter-spacing:0.435px;"><u>W</u>idth:</div>
<div class="fld" style="left:887.5px;top:162.0px;width:110px;height:20.6px;"></div>
<div style="left:891.53px;top:166.55px;font-size:11.8px;line-height:13.74px;color:#8e8e8e;font-weight:normal;white-space:pre;letter-spacing:0.089px;">0.0139 in</div>
<div style="left:821.33px;top:192.15px;font-size:11.8px;line-height:13.74px;color:#8e8e8e;font-weight:normal;white-space:pre;letter-spacing:-0.099px;"><u>H</u>eight:</div>
<div class="fld" style="left:887.5px;top:187.6px;width:110px;height:20.6px;"></div>
<div style="left:891.53px;top:192.15px;font-size:11.8px;line-height:13.74px;color:#8e8e8e;font-weight:normal;white-space:pre;letter-spacing:0.089px;">0.0139 in</div>
<div style="left:821.33px;top:217.65px;font-size:11.8px;line-height:13.74px;color:#8e8e8e;font-weight:normal;white-space:pre;letter-spacing:0.009px;"><u>R</u>otation:</div>
<div class="fld" style="left:887.5px;top:213.1px;width:110px;height:20.6px;"></div>
<div style="left:891.53px;top:217.65px;font-size:11.8px;line-height:13.74px;color:#8e8e8e;font-weight:normal;white-space:pre;letter-spacing:0.133px;">0.0 °</div>
<div style="left:822.13px;top:250.05px;font-size:11.8px;line-height:13.74px;color:#8e8e8e;font-weight:normal;white-space:pre;letter-spacing:0.120px;">Basepoint:</div>
<div style="left:812.84px;top:286.22px;font-size:11.4px;line-height:13.27px;color:#ccc094;font-weight:bold;white-space:pre;letter-spacing:-0.021px;">Level</div>
<div class="btn" style="left:823.2px;top:299.4px;width:14.6px;height:14.4px;"></div>
<div class="btn" style="left:842.4px;top:299.4px;width:14.6px;height:14.4px;"></div>
<div class="btn" style="left:823.2px;top:318.2px;width:14.6px;height:14.4px;"></div>
<div class="btn" style="left:842.4px;top:318.2px;width:14.6px;height:14.4px;"></div>
<div style="left:861.53px;top:310.65px;font-size:11.8px;line-height:13.74px;color:#8e8e8e;font-weight:normal;white-space:pre;letter-spacing:-0.043px;">163</div>
<div class="btn" style="left:914.2px;top:287.2px;width:21.2px;height:21.6px;border-color:#d8d0b4;"></div>
<div class="btn" style="left:939.9px;top:287.2px;width:21.2px;height:21.6px;border-color:#d8d0b4;"></div>
<div class="btn" style="left:965.6px;top:287.2px;width:21.2px;height:21.6px;border-color:#d8d0b4;"></div>
<div class="btn" style="left:991.2px;top:287.2px;width:21.2px;height:21.6px;border-color:#d8d0b4;"></div>
<div class="btn" style="left:914.2px;top:314.6px;width:21.2px;height:21.6px;border-color:#d8d0b4;"></div>
<div class="btn" style="left:939.9px;top:314.6px;width:21.2px;height:21.6px;border-color:#d8d0b4;"></div>
<div class="btn" style="left:965.6px;top:314.6px;width:21.2px;height:21.6px;border-color:#d8d0b4;"></div>
<svg style="left:806px;top:0" width="218" height="560" viewBox="806 0 218 560"><path d="M986 112.0v18.6" stroke="#ddd6bb" stroke-width="1"/><path d="M989.4 118.1l2.3-2.3 2.3 2.3M989.4 124.7l2.3 2.3 2.3-2.3" stroke="#c6bf9f" stroke-width="1" fill="none"/><path d="M986 137.5v18.6" stroke="#ddd6bb" stroke-width="1"/><path d="M989.4 143.60000000000002l2.3-2.3 2.3 2.3M989.4 150.20000000000002l2.3 2.3 2.3-2.3" stroke="#c6bf9f" stroke-width="1" fill="none"/><path d="M986 163.0v18.6" stroke="#ddd6bb" stroke-width="1"/><path d="M989.4 169.10000000000002l2.3-2.3 2.3 2.3M989.4 175.70000000000002l2.3 2.3 2.3-2.3" stroke="#c6bf9f" stroke-width="1" fill="none"/><path d="M986 188.6v18.6" stroke="#ddd6bb" stroke-width="1"/><path d="M989.4 194.70000000000002l2.3-2.3 2.3 2.3M989.4 201.3l2.3 2.3 2.3-2.3" stroke="#c6bf9f" stroke-width="1" fill="none"/><path d="M986 214.1v18.6" stroke="#ddd6bb" stroke-width="1"/><path d="M989.4 220.20000000000002l2.3-2.3 2.3 2.3M989.4 226.8l2.3 2.3 2.3-2.3" stroke="#c6bf9f" stroke-width="1" fill="none"/><path d="M929.3 140.5v12.5M929.3 166v12.5" stroke="#555" stroke-width="1"/><path d="M1003 169.5h2.6v4M1003 201h2.6v-4" stroke="#bbb" stroke-width=".8" fill="none"/><rect x="1004.6" y="176" width="4" height="6" rx="1.6" fill="#888" stroke="#333" stroke-width=".9"/><rect x="1004.6" y="188" width="4" height="6" rx="1.6" fill="#888" stroke="#333" stroke-width=".9"/><rect x="892.6" y="244" width="23" height="23" fill="none" stroke="#666" stroke-width="1.500"/><circle cx="892.6" cy="244" r="3.600" fill="#faf9f3" stroke="#666" stroke-width="1.400"/><circle cx="915.6" cy="244" r="3.600" fill="#faf9f3" stroke="#666" stroke-width="1.400"/><circle cx="892.6" cy="267" r="3.600" fill="#faf9f3" stroke="#666" stroke-width="1.400"/><circle cx="915.6" cy="267" r="3.600" fill="#faf9f3" stroke="#666" stroke-width="1.400"/><circle cx="892.6" cy="244" r="1.7" fill="#666"/><circle cx="904" cy="255.500" r="3.800" fill="#faf9f3" stroke="#707070" stroke-width="1.500"/><path d="M830.5 302.59999999999997l4.6 4.6h-2.4v3.6h-4.4v-3.6h-2.4z" fill="#c6c5bf" stroke="#a9a8a2" stroke-width=".7"/><path d="M849.7 302.9l4.6 4.6h-2.4v3.6h-4.4v-3.6h-2.4z" fill="#c6c5bf" stroke="#a9a8a2" stroke-width=".7"/><path d="M844.7 301.9h10" stroke="#8f8e88" stroke-width="1.1"/><path d="M830.5 329.6l4.6 -4.6h-2.4v-3.6h-4.4v3.6h-2.4z" fill="#c6c5bf" stroke="#a9a8a2" stroke-width=".7"/><path d="M849.7 329.3l4.6 -4.6h-2.4v-3.6h-4.4v3.6h-2.4z" fill="#c6c5bf" stroke="#a9a8a2" stroke-width=".7"/><path d="M844.7 330.3h10" stroke="#8f8e88" stroke-width="1.1"/><g transform="translate(924.8 298)"><rect x="-6.4" y="-3.4" width="7" height="8.6" fill="#8d8c86" stroke="#55544f" stroke-width=".8"/><circle cx="1.6" cy="-.6" r="5.6" fill="#6c6b66"/><path d="M-.6 5.4v-5c0-3 4.8-3 4.8 0v5z" fill="#a9a8a2" stroke="#444" stroke-width=".6"/></g><g transform="translate(925.2 325.5)"><rect x="-6.4" y="-2.4" width="6" height="7.6" fill="#8d8c86" stroke="#55544f" stroke-width=".8"/><circle cx="1.6" cy="-1.4" r="4.6" fill="#5f5e59"/><path d="M-.4 5.6v-4.6c0-2.8 4.4-2.8 4.4 0v4.6z" fill="#a9a8a2" stroke="#444" stroke-width=".6"/></g><g transform="translate(950.5 298)"><path d="M-4.6 0l3-2.6v1.6h3.2v-1.6l3 2.6-3 2.6v-1.6h-3.2v1.6z" fill="#b9b8b2" stroke="#9b9a94" stroke-width=".6"/></g><g transform="translate(950.9 325.5)"><path d="M0 -4.6l2.6 3h-1.6v3.2h1.6l-2.6 3-2.6-3h1.6v-3.2h-1.6z" fill="#b9b8b2" stroke="#9b9a94" stroke-width=".6"/></g><g transform="translate(976.2 298)"><rect x="-4.6" y="-.4" width="8" height="5.6" rx=".8" fill="#d9d8d3" stroke="#b5b4ae" stroke-width=".8"/><path d="M.6 -.4v-2.2c0-3 4.4-3 4.4 0v1.2" fill="none" stroke="#c2c1bb" stroke-width="1.1"/></g><g transform="translate(1001.8 298)"><rect x="-4.200" y="-3.800" width="8.400" height="7.600" fill="none" stroke="#3a3a3a" stroke-width="1.100"/><path d="M-6 -5.600h12M-6 5.600h12M-6 -5.600v11.200M6 -5.600v11.200" stroke="#3a3a3a" stroke-width=".9" stroke-dasharray="1.300 2.260" fill="none"/></g><g transform="translate(976.6 325.5)"><rect x="-4.8" y="-.6" width="9.6" height="5.8" rx=".8" fill="#d6d5d0" stroke="#b5b4ae" stroke-width=".8"/><rect x="-3" y="-5.2" width="6" height="4.6" fill="#ecebe6" stroke="#bdbcb6" stroke-width=".7"/><path d="M-1.4 -3h2.8M0 -4.4v2.8" stroke="#a9a8a2" stroke-width=".7"/></g></svg>
<div style="left:812.3px;top:400.20000000000005px;width:204px;height:21.3px;border-top:1px solid #fcfbf6;border-bottom:1px solid #dcd8c6;border-right:1px solid #ebe8da;background:linear-gradient(#fbfaf4,#f7f6ee);"></div>
<div style="left:815.11px;top:404.68px;font-size:12.2px;line-height:14.20px;color:#9a9a9a;font-weight:normal;white-space:pre;"><u>S</u>hape</div>
<div style="left:812.3px;top:425.6px;width:204px;height:21.3px;border-top:1px solid #fcfbf6;border-bottom:1px solid #dcd8c6;border-right:1px solid #ebe8da;background:linear-gradient(#fbfaf4,#f7f6ee);"></div>
<div style="left:815.11px;top:430.08px;font-size:12.2px;line-height:14.20px;color:#9a9a9a;font-weight:normal;white-space:pre;"><u>G</u>roup</div>
<div style="left:812.3px;top:450.90000000000003px;width:204px;height:21.3px;border-top:1px solid #fcfbf6;border-bottom:1px solid #dcd8c6;border-right:1px solid #ebe8da;background:linear-gradient(#fbfaf4,#f7f6ee);"></div>
<div style="left:815.11px;top:455.38px;font-size:12.2px;line-height:14.20px;color:#9a9a9a;font-weight:normal;white-space:pre;"><u>T</u>ext</div>
<div style="left:812.3px;top:476.20000000000005px;width:204px;height:21.3px;border-top:1px solid #fcfbf6;border-bottom:1px solid #dcd8c6;border-right:1px solid #ebe8da;background:linear-gradient(#fbfaf4,#f7f6ee);"></div>
<div style="left:815.11px;top:480.68px;font-size:12.2px;line-height:14.20px;color:#9a9a9a;font-weight:normal;white-space:pre;"><u>I</u>mage</div>
<div style="left:812.3px;top:501.6px;width:204px;height:21.3px;border-top:1px solid #fcfbf6;border-bottom:1px solid #dcd8c6;border-right:1px solid #ebe8da;background:linear-gradient(#fbfaf4,#f7f6ee);"></div>
<div style="left:815.11px;top:506.08px;font-size:12.2px;line-height:14.20px;color:#9a9a9a;font-weight:normal;white-space:pre;"><u>L</u>ine</div>
<div style="left:812.3px;top:527.0px;width:204px;height:21.3px;border-top:1px solid #fcfbf6;border-bottom:1px solid #dcd8c6;border-right:1px solid #ebe8da;background:linear-gradient(#fbfaf4,#f7f6ee);"></div>
<div style="left:815.11px;top:531.48px;font-size:12.2px;line-height:14.20px;color:#9a9a9a;font-weight:normal;white-space:pre;"><u>C</u>olors</div>
<div style="left:0px;top:556px;width:1024px;height:20px;background:linear-gradient(#f7f5ec,#f0ede1);"></div>
<div style="left:0px;top:556px;width:1024px;height:1px;background:#f9f8f1;"></div>
<svg style="left:6px;top:559px" width="16" height="16"><rect x="2.400" y="2.200" width="9.600" height="7.600" rx="1" fill="#a5a49e" stroke="#7a7973" stroke-width=".8"/><rect x="3.800" y="3.500" width="6.800" height="5" fill="#3f6fb6"/><path d="M1.400 12.600l1.400-2.200h8.800l1.400 2.200z" fill="#dcdbd6" stroke="#9a9993" stroke-width=".7"/></svg>
<div style="left:23.03px;top:561.14px;font-size:11.7px;line-height:13.62px;color:#3a3a3a;font-weight:normal;white-space:pre;letter-spacing:0.041px;">Computer</div>
<svg style="left:82px;top:557px" width="20" height="18"><rect x="1.5" y="3" width="14" height="12.6" rx="1" fill="#f2d84a" stroke="#c9a21e" stroke-width=".9"/><path d="M1.5 13.6h14v2h-14z" fill="#e0a030"/><path d="M6.6 11.4l1-2.8 7-7 1.8 1.8-7 7z" fill="#d9a35a" stroke="#6e4a12" stroke-width=".8"/><path d="M6.6 11.4l1-2.8 1.8 1.8z" fill="#333"/></svg>
<svg style="left:102px;top:558px" width="6" height="16"><path d="M1.5 2v13M3.5 2v13" stroke="#d2ccb6" stroke-width="1" stroke-dasharray="1 1.5"/></svg>
<div style="left:108.0px;top:558.2px;width:54.5px;height:16.4px;border:1px solid #cdc5a8;border-radius:3px;background:linear-gradient(#fcfbf6,#f1eee1);"></div>
<div style="left:131.13px;top:561.14px;font-size:11.7px;line-height:13.62px;color:#3a3a3a;font-weight:normal;white-space:pre;">[L<span style="position:static;letter-spacing:1px;color:#8a8a8a">...</span></div>
<div style="left:164.52px;top:558.2px;width:54.5px;height:16.4px;border:1px solid #cdc5a8;border-radius:3px;background:linear-gradient(#fcfbf6,#f1eee1);"></div>
<div style="left:187.65px;top:561.14px;font-size:11.7px;line-height:13.62px;color:#3a3a3a;font-weight:normal;white-space:pre;">[D<span style="position:static;letter-spacing:1px;color:#8a8a8a">...</span></div>
<div style="left:221.04000000000002px;top:558.2px;width:54.5px;height:16.4px;border:1px solid #cdc5a8;border-radius:3px;background:linear-gradient(#fcfbf6,#f1eee1);"></div>
<div style="left:244.17px;top:561.14px;font-size:11.7px;line-height:13.62px;color:#3a3a3a;font-weight:normal;white-space:pre;">[S<span style="position:static;letter-spacing:1px;color:#8a8a8a">...</span></div>
<div style="left:277.56px;top:558.2px;width:54.5px;height:16.4px;border:1px solid #c3b88f;border-radius:3px;background:linear-gradient(#e6dfc4,#efe9d4);"></div>
<div style="left:300.69px;top:561.14px;font-size:11.7px;line-height:13.62px;color:#3a3a3a;font-weight:normal;white-space:pre;">Sc<span style="position:static;letter-spacing:1px;color:#8a8a8a">...</span></div>
<div style="left:334.08000000000004px;top:558.2px;width:54.5px;height:16.4px;border:1px solid #cdc5a8;border-radius:3px;background:linear-gradient(#fcfbf6,#f1eee1);"></div>
<div style="left:357.21px;top:561.14px;font-size:11.7px;line-height:13.62px;color:#3a3a3a;font-weight:normal;white-space:pre;">[N<span style="position:static;letter-spacing:1px;color:#8a8a8a">...</span></div>
<div style="left:390.6px;top:558.2px;width:54.5px;height:16.4px;border:1px solid #cdc5a8;border-radius:3px;background:linear-gradient(#fcfbf6,#f1eee1);"></div>
<div style="left:413.73px;top:561.14px;font-size:11.7px;line-height:13.62px;color:#3a3a3a;font-weight:normal;white-space:pre;">[P<span style="position:static;letter-spacing:1px;color:#8a8a8a">...</span></div>
<div style="left:447.12px;top:558.2px;width:54.5px;height:16.4px;border:1px solid #cdc5a8;border-radius:3px;background:linear-gradient(#fcfbf6,#f1eee1);"></div>
<div style="left:470.25px;top:561.14px;font-size:11.7px;line-height:13.62px;color:#3a3a3a;font-weight:normal;white-space:pre;">[P<span style="position:static;letter-spacing:1px;color:#8a8a8a">...</span></div>
<div style="left:503.64000000000004px;top:558.2px;width:54.5px;height:16.4px;border:1px solid #cdc5a8;border-radius:3px;background:linear-gradient(#fcfbf6,#f1eee1);"></div>
<div style="left:526.77px;top:561.14px;font-size:11.7px;line-height:13.62px;color:#3a3a3a;font-weight:normal;white-space:pre;">[N<span style="position:static;letter-spacing:1px;color:#8a8a8a">...</span></div>
<div style="left:560.1600000000001px;top:558.2px;width:54.5px;height:16.4px;border:1px solid #cdc5a8;border-radius:3px;background:linear-gradient(#fcfbf6,#f1eee1);"></div>
<div style="left:582.29px;top:561.14px;font-size:11.7px;line-height:13.62px;color:#3a3a3a;font-weight:normal;white-space:pre;">[Fi<span style="position:static;letter-spacing:1px;color:#8a8a8a">...</span></div>
<div style="left:616.6800000000001px;top:558.2px;width:54.5px;height:16.4px;border:1px solid #cdc5a8;border-radius:3px;background:linear-gradient(#fcfbf6,#f1eee1);"></div>
<div style="left:639.81px;top:561.14px;font-size:11.7px;line-height:13.62px;color:#3a3a3a;font-weight:normal;white-space:pre;">[N<span style="position:static;letter-spacing:1px;color:#8a8a8a">...</span></div>
<svg style="left:0;top:556px" width="1024" height="20" viewBox="0 556 1024 20"><path d="M116.5 570.8c-1-3 0-5 2-6 -2.6-1-2-5 1-5 3 0 3.4 3 2.4 4.4 2.6-.4 4.6 1.6 4.6 4 0 2-1 2.6-2.6 2.6z" fill="#d5e3f4" stroke="#7a9fcb" stroke-width=".9"/><path d="M173.02 560.6999999999999h5.6l2.6 2.6v8.6h-8.2z" fill="#f0efea" stroke="#c2c1bb" stroke-width=".8"/><rect x="175.42000000000002" y="566.3" width="3.4" height="3.4" fill="#d2d1cb"/><path d="M174.82000000000002 563.9h3" stroke="#d2d1cb" stroke-width=".8"/><path d="M229.54000000000002 560.6999999999999h5.6l2.6 2.6v8.6h-8.2z" fill="#f0efea" stroke="#c2c1bb" stroke-width=".8"/><rect x="231.94000000000003" y="566.3" width="3.4" height="3.4" fill="#d2d1cb"/><path d="M231.34000000000003 563.9h3" stroke="#d2d1cb" stroke-width=".8"/><circle cx="290.06" cy="566.3" r="5.4" fill="#2f6fb4"/><circle cx="288.66" cy="564.6999999999999" r="2.6" fill="#7fb2e2"/><path d="M288.06 569.3c2-1 3-3 4.4-5" stroke="#16406f" stroke-width="1.2" fill="none"/><circle cx="346.58000000000004" cy="566.3" r="5.6" fill="#e9853a"/><circle cx="347.18000000000006" cy="565.5" r="3.2" fill="#8ea6d6"/><path d="M341.38000000000005 564.6999999999999c1.6-4 7-5 10-1.4-3.4-1.6-6-.6-7 1.6-.6 1.6.4 3.4 2 4-3 .6-5.6-1.2-5-4.2z" fill="#f0a84a"/><rect x="399.90000000000003" y="560.5" width="6.4" height="4.6" fill="#f6f5f1" stroke="#cfcec8" stroke-width=".7"/><rect x="397.5" y="564.9" width="11.2" height="5.2" rx="1" fill="#e4e3de" stroke="#c5c4be" stroke-width=".8"/><rect x="398.90000000000003" y="568.9" width="8.4" height="2.6" fill="#f4f3ef" stroke="#cfcec8" stroke-width=".6"/><rect x="456.42" y="560.5" width="6.4" height="4.6" fill="#f6f5f1" stroke="#cfcec8" stroke-width=".7"/><rect x="454.02" y="564.9" width="11.2" height="5.2" rx="1" fill="#e4e3de" stroke="#c5c4be" stroke-width=".8"/><rect x="455.42" y="568.9" width="8.4" height="2.6" fill="#f4f3ef" stroke="#cfcec8" stroke-width=".6"/><rect x="512.94" y="560.5" width="6.4" height="4.6" fill="#f6f5f1" stroke="#cfcec8" stroke-width=".7"/><rect x="510.5400000000001" y="564.9" width="11.2" height="5.2" rx="1" fill="#e4e3de" stroke="#c5c4be" stroke-width=".8"/><rect x="511.9400000000001" y="568.9" width="8.4" height="2.6" fill="#f4f3ef" stroke="#cfcec8" stroke-width=".6"/><circle cx="572.6600000000001" cy="566.3" r="5.6" fill="#e9853a"/><circle cx="573.2600000000001" cy="565.5" r="3.2" fill="#8ea6d6"/><path d="M567.46 564.6999999999999c1.6-4 7-5 10-1.4-3.4-1.6-6-.6-7 1.6-.6 1.6.4 3.4 2 4-3 .6-5.6-1.2-5-4.2z" fill="#f0a84a"/><rect x="623.7800000000001" y="561.3" width="10.8" height="10" rx="1" fill="#f4dc62" stroke="#d0b03a" stroke-width=".8"/><path d="M626.58 568.9l.8-2.2 4.6-4.6 1.4 1.4-4.6 4.6z" fill="#e6b86a" stroke="#a67c2e" stroke-width=".6"/><path d="M674 559v13M676 559v13" stroke="#d2ccb6" stroke-width="1" stroke-dasharray="1 1.5"/><path d="M683.5 571.5c-1.4-3 0-5.6 2.4-6.4-3-1-2.4-5.6 1.2-5.6 3.4 0 3.8 3.6 2.6 5 3-.4 5.2 1.8 5.2 4.4 0 2-1.2 2.8-3 2.8z" fill="#dbe8f6" stroke="#3f78bb" stroke-width="1.6"/><circle cx="705" cy="565" r="5.6" fill="#9a9993" stroke="#6f6e69" stroke-width=".8"/><circle cx="705" cy="565" r="2.8" fill="#6f9fd6"/><rect x="706" y="566" width="7.6" height="6.6" rx="1" fill="#ecebe6" stroke="#9b9a94" stroke-width=".8"/><path d="M718.5 563h2.6l3.6-3.4v12.8l-3.6-3.4h-2.6z" fill="#c9c8c2" stroke="#8d8c86" stroke-width=".8"/><path d="M727 562c1.6 2 1.6 5.6 0 7.600M729.400 560c2.6 3.400 2.6 8.600 0 12" stroke="#a9a8a2" stroke-width=".9" fill="none"/><path d="M738.500 572.500v-3.500h2.800v3.500zM742 572.500v-6h2.800v6zM745.500 572.500v-9h2.800v9zM749 572.500v-12.500h2.800v12.500z" fill="#4f88cc" stroke="#2e62a6" stroke-width=".5"/><rect x="756.500" y="559" width="15" height="10.600" rx="1" fill="#8f8e88" stroke="#5f5e59" stroke-width=".8"/><rect x="758" y="560.400" width="12" height="7.800" fill="#4a4943"/><path d="M758 568.200l5-6 7 6z" fill="#e9cf4a"/><path d="M759 573.500h10l-1.600-3h-6.800z" fill="#d6d5d0" stroke="#8f8e88" stroke-width=".6"/></svg>
<div style="left:774.4px;top:558.6px;width:113.4px;height:16.2px;background:#cdba8c;border-radius:2.5px;box-shadow:0 0 0 0.6px #b9a77c;overflow:hidden;"><div style="left:0px;top:0px;width:21.8px;height:16.2px;background:#a9caec;"></div><div style="left:21.8px;top:0px;width:5.6px;height:16.2px;background:#3f6ea8;"></div><div style="left:56.3px;top:0px;width:1px;height:16.2px;background:#e3d8b4;"></div><div style="left:84.8px;top:0px;width:1px;height:16.2px;background:#e3d8b4;"></div><div style="left:5px;top:2.6px;width:11px;height:11px;border-radius:50%;background:radial-gradient(circle at 40% 32%,#a9d3f0 0,#4f8fcb 26%,#2a629f 55%,#12345c 100%);"></div></div>
<div style="left:891.53px;top:561.14px;font-size:11.7px;line-height:13.62px;color:#2e2e2e;font-weight:normal;white-space:pre;letter-spacing:0.016px;">Sun Oct  3,  9:53 PM</div>
<svg style="left:1004px;top:557px" width="20" height="19"><rect x="3.400" y="1.700" width="15.200" height="14.600" rx="2" fill="#f7f5ec" stroke="#d2cbb0" stroke-width=".8"/><rect x="5" y="3.300" width="12" height="11.400" rx="1" fill="#4d5a6e"/><ellipse cx="11" cy="9" rx="5" ry="4.300" fill="#a9b58a"/></svg>
</div></body></html>
